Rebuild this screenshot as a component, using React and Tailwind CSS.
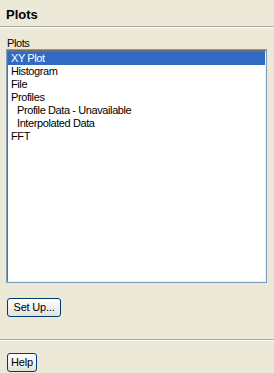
export default function App() {
  const items = [
    { t: "XY Plot", sel: true, indent: false },
    { t: "Histogram" },
    { t: "File" },
    { t: "Profiles" },
    { t: "Profile Data - Unavailable", indent: true },
    { t: "Interpolated Data", indent: true },
    { t: "FFT" },
  ];
  return (
    <div
      className="w-[274px] h-[373px] bg-[#ece9d8] text-black overflow-hidden flex flex-col"
      style={{ fontFamily: '"Liberation Sans", Arial, sans-serif' }}
    >
      <div className="h-[27px] pl-[6px] pt-[7px] text-[13px] leading-[16px] font-bold">Plots</div>
      <div className="h-[2px] mr-[1px] border-t border-[#aca899] border-b border-b-white" />
      <div className="pl-[7px] pt-[9px] h-[21px] text-[11px] leading-[13px] tracking-[-0.4px]">Plots</div>
      <div className="ml-[6px] w-[261px] h-[241px] border border-[#7f9db9] flex">
        <div className="flex-1 bg-white border-l border-t-2 border-l-[#716f64] border-t-[#716f64] border-r border-b border-r-[#f1efe2] border-b-[#f1efe2] text-[11px] leading-[13px] tracking-[-0.4px]">
          {items.map((it, i) => (
            <div
              key={i}
              className={
                "h-[13px] whitespace-nowrap " +
                (it.indent ? "pl-[9px] " : "pl-[3px] ") +
                (it.sel ? "bg-[#316ac5] text-white" : "")
              }
            >
              {it.t}
            </div>
          ))}
        </div>
      </div>
      <div className="pl-[7px] pt-[11px]">
        <button className="w-[54px] h-[19px] rounded-[3px] border border-[#003c74] bg-gradient-to-b from-white to-[#e3e2da] text-[11px] leading-[13px] tracking-[-0.2px] px-0">
          Set Up...
        </button>
      </div>
      <div className="mt-[21px] h-[2px] border-t border-[#aca899] border-b border-b-white" />
      <div className="pl-[7px] pt-[8px]">
        <button className="w-[30px] h-[19px] rounded-[3px] border border-[#003c74] bg-gradient-to-b from-white to-[#e3e2da] text-[11px] leading-[13px] tracking-[-0.2px] px-0">
          Help
        </button>
      </div>
    </div>
  );
}
